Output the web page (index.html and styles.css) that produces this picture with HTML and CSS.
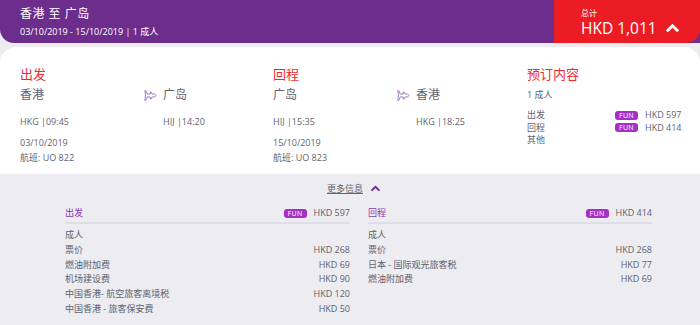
FILE: index.html
```html
<!DOCTYPE html>
<html lang="zh">
<head>
    <meta charset="UTF-8">
    <title>香港 至 广岛</title>
    <link rel="stylesheet" href="styles.css">
</head>
<body>

<header class="top-bar">
    <div class="trip">
        <div class="trip-title">香港 至 广岛</div>
        <div class="trip-sub">03/10/2019 - 15/10/2019 | 1 成人</div>
    </div>
    <div class="total-box">
        <div class="total-label">总计</div>
        <div class="total-price">HKD 1,011
            <svg class="chev" viewBox="0 0 16 10" width="15" height="10"><path d="M2 8.5 L8 2.5 L14 8.5" fill="none" stroke="#fff" stroke-width="3"/></svg>
        </div>
    </div>
</header>

<section class="summary-card">
    <div class="leg">
        <h2 class="sec-title">出发</h2>
        <div class="leg-grid">
            <div class="city">香港</div>
            <svg class="plane" viewBox="0 0 24 20" width="16" height="13"><path d="M4 2.5h1.6l2.2 5.3h4.5V4.6h1.5l1.5 3.2h2.9c1.6 0 2.8 1 2.8 2.2s-1.2 2.2-2.8 2.2h-2.9l-1.5 3.2h-1.5v-3.2H7.8l-2.2 5.3H4l1.1-8.5z" fill="none" stroke="#9b70b8" stroke-width="1.4" stroke-linejoin="round"/></svg>
            <div class="city">广岛</div>
            <div class="time">HKG |09:45</div>
            <div></div>
            <div class="time">HIJ |14:20</div>
        </div>
        <div class="info">03/10/2019</div>
        <div class="info">航班: UO 822</div>
    </div>
    <div class="leg">
        <h2 class="sec-title">回程</h2>
        <div class="leg-grid">
            <div class="city">广岛</div>
            <svg class="plane" viewBox="0 0 24 20" width="16" height="13"><path d="M4 2.5h1.6l2.2 5.3h4.5V4.6h1.5l1.5 3.2h2.9c1.6 0 2.8 1 2.8 2.2s-1.2 2.2-2.8 2.2h-2.9l-1.5 3.2h-1.5v-3.2H7.8l-2.2 5.3H4l1.1-8.5z" fill="none" stroke="#9b70b8" stroke-width="1.4" stroke-linejoin="round"/></svg>
            <div class="city">香港</div>
            <div class="time">HIJ |15:35</div>
            <div></div>
            <div class="time">HKG |18:25</div>
        </div>
        <div class="info">15/10/2019</div>
        <div class="info">航班: UO 823</div>
    </div>
    <div class="booking">
        <h2 class="sec-title">预订内容</h2>
        <div class="pax">1 成人</div>
        <div class="book-rows">
            <span>出发</span><span class="fun">FUN</span><span>HKD 597</span>
            <span>回程</span><span class="fun">FUN</span><span>HKD 414</span>
            <span>其他</span><span></span><span></span>
        </div>
    </div>
</section>

<div class="more">
    <span class="more-link">更多信息</span>
    <svg viewBox="0 0 12 8" width="11" height="7"><path d="M1.5 6.5 L6 2 L10.5 6.5" fill="none" stroke="#6d2d8c" stroke-width="2.2"/></svg>
</div>

<section class="details">
    <div class="detail-col">
        <div class="detail-head">
            <span class="detail-title">出发</span>
            <span class="fun">FUN</span>
            <span>HKD 597</span>
        </div>
        <div class="detail-row"><span>成人</span></div>
        <div class="detail-row"><span>票价</span><span>HKD 268</span></div>
        <div class="detail-row"><span>燃油附加费</span><span>HKD 69</span></div>
        <div class="detail-row"><span>机场建设费</span><span>HKD 90</span></div>
        <div class="detail-row"><span>中国香港- 航空旅客离境税</span><span>HKD 120</span></div>
        <div class="detail-row"><span>中国香港 - 旅客保安费</span><span>HKD 50</span></div>
    </div>
    <div class="detail-col">
        <div class="detail-head">
            <span class="detail-title">回程</span>
            <span class="fun">FUN</span>
            <span>HKD 414</span>
        </div>
        <div class="detail-row"><span>成人</span></div>
        <div class="detail-row"><span>票价</span><span>HKD 268</span></div>
        <div class="detail-row"><span>日本 - 国际观光旅客税</span><span>HKD 77</span></div>
        <div class="detail-row"><span>燃油附加费</span><span>HKD 69</span></div>
    </div>
</section>

</body>
</html>
```

FILE: styles.css
```css
body {
    margin: 0;
    font-family: "Open Sans", "Noto Sans CJK SC", sans-serif;
    background-color: #ececf1;
    color: #62626f;
    width: 700px;
    height: 325px;
    overflow: hidden;
}
.top-bar {
    display: flex;
    height: 43px;
    background-color: #6d2d8c;
    border-bottom-left-radius: 14px;
    color: white;
}
.trip {
    flex: 1;
    padding: 6px 0 0 20px;
}
.trip-title {
    font-size: 12px;
    line-height: 16px;
    letter-spacing: 0.5px;
}
.trip-sub {
    font-size: 9px;
    line-height: 14px;
    margin-top: 3px;
}
.total-box {
    width: 119px;
    padding: 8px 0 0 27px;
    background-color: #ec1c24;
    border-bottom-right-radius: 14px;
    color: white;
}
.total-label {
    font-size: 8px;
    line-height: 10px;
}
.total-price {
    display: flex;
    align-items: center;
    gap: 8px;
    margin-top: 1px;
    font-size: 15.5px;
    line-height: 18px;
}
.summary-card {
    display: grid;
    grid-template-columns: 253px 254px 1fr;
    margin-top: 4px;
    height: 127px;
    box-sizing: border-box;
    padding: 18px 0 0 20px;
    background-color: white;
    border-radius: 16px 16px 0 0;
}
.sec-title {
    margin: 0;
    font-size: 13px;
    line-height: 18px;
    font-weight: normal;
    color: #ee2a30;
}
.leg-grid {
    display: grid;
    grid-template-columns: 122px 21px 1fr;
    grid-template-rows: 16px 14px;
    row-gap: 12px;
    align-items: center;
    margin-top: 4px;
}
.city {
    font-size: 12px;
    line-height: 16px;
}
.plane {
    display: block;
}
.time {
    font-size: 9px;
    line-height: 14px;
}
.info {
    font-size: 9px;
    line-height: 15px;
}
.leg-grid + .info {
    margin-top: 6px;
}
.pax {
    margin-top: 4px;
    font-size: 9px;
    line-height: 16px;
}
.book-rows {
    display: grid;
    grid-template-columns: 81px auto 1fr;
    column-gap: 7px;
    align-items: center;
    margin-top: 6px;
    font-size: 9px;
    line-height: 12.5px;
    white-space: nowrap;
}
.fun {
    display: inline-block;
    width: 23px;
    height: 9px;
    border-radius: 3px;
    background-color: #a530c6;
    color: white;
    font-size: 7px;
    line-height: 9px;
    text-align: center;
    letter-spacing: 0.3px;
}
.more {
    display: flex;
    justify-content: center;
    align-items: center;
    gap: 7px;
    margin-top: 7px;
    padding-left: 8px;
    font-size: 9px;
    line-height: 15px;
}
.more-link {
    text-decoration: underline;
}
.details {
    display: grid;
    grid-template-columns: 285px 284px;
    column-gap: 18px;
    margin: 9px 0 0 65px;
    font-size: 9px;
}
.detail-head {
    display: flex;
    align-items: center;
    gap: 7px;
    line-height: 16px;
    padding-bottom: 1px;
    border-bottom: 2px solid #dedee8;
    margin-bottom: 4px;
}
.detail-title {
    flex: 1;
    color: #8a3aa8;
}
.detail-row {
    display: flex;
    justify-content: space-between;
    line-height: 14.8px;
}
```
